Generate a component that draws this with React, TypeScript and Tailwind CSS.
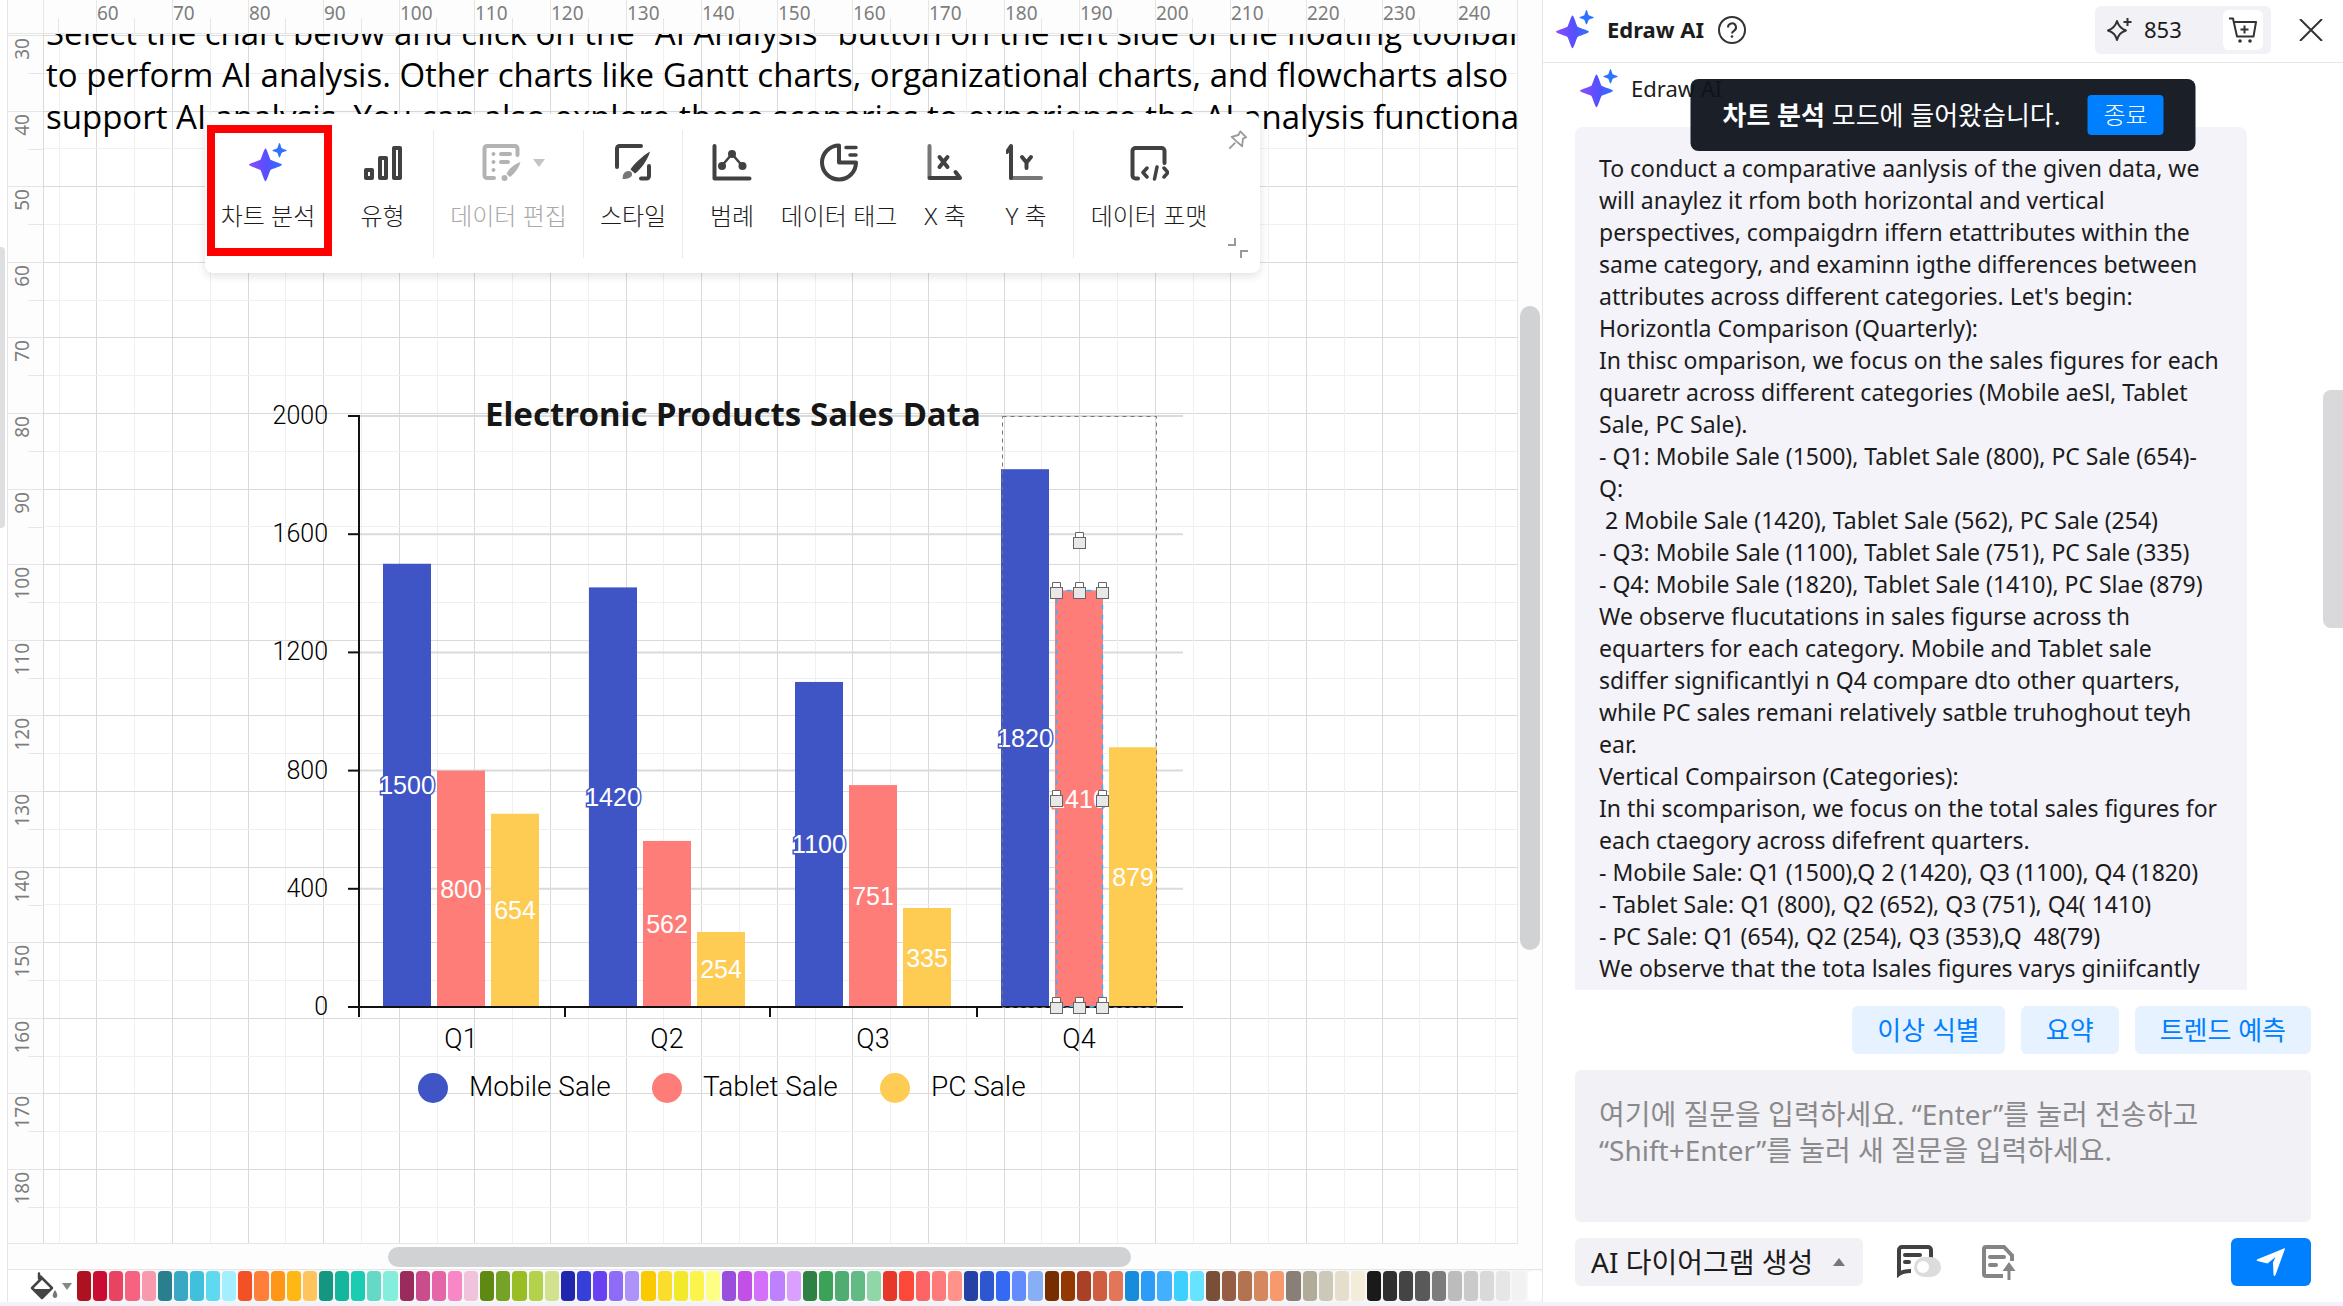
import React from "react";

const SERIES = [
  { name: "Mobile Sale", color: "#4055c5", dot: 433, text: 469 },
  { name: "Tablet Sale", color: "#ff7d78", dot: 667, text: 703 },
  { name: "PC Sale", color: "#fecc53", dot: 895, text: 931 },
];

const QUARTERS = [
  { name: "Q1", values: [1500, 800, 654] },
  { name: "Q2", values: [1420, 562, 254] },
  { name: "Q3", values: [1100, 751, 335] },
  { name: "Q4", values: [1820, 1410, 879] },
];

const SWATCHES = [
  "#ae1120", "#cb0c32", "#e84361", "#f56380", "#f79aae",
  "#2a7f8f", "#38a8c4", "#3fc1de", "#5fd9ef", "#a4efff",
  "#f25125", "#ff7e39", "#ff9618", "#ffb714", "#ffc45e",
  "#149680", "#16b69d", "#1accb2", "#65d9c6", "#84eddb",
  "#9a2b5d", "#c94c8b", "#e566a6", "#f787c6", "#f0c2dc",
  "#608912", "#76a228", "#99be25", "#b3d14a", "#d1e18e",
  "#2026ad", "#3640d9", "#6a41f0", "#8e6cf8", "#ad92fa",
  "#fac900", "#fbdd2c", "#f0ea2a", "#faf44b", "#fdfe84",
  "#994edc", "#c250e6", "#d36ffa", "#bf80ff", "#dba0ff",
  "#2f8043", "#3ba257", "#50ac73", "#62bb85", "#90d6a9",
  "#e6382a", "#fe493a", "#fc6465", "#ff7a7a", "#ff9289",
  "#2541a5", "#2d57d1", "#3369f3", "#628bfe", "#88aef5",
  "#762e01", "#943802", "#a84126", "#cf5e40", "#e27658",
  "#188cdc", "#2c9cf6", "#43b0ff", "#3cd0ff", "#68e3ff",
  "#7a4f37", "#945d44", "#b37250", "#d5875f", "#f6996c",
  "#897f76", "#b1ab99", "#cdc9b8", "#e6decd", "#f3ecd9",
  "#1a1a1a", "#2f2f2f", "#444444", "#595959", "#7c7c7c",
  "#bcbcbc", "#cacaca", "#d9d9d9", "#e6e6e6", "#f2f2f2", "#ffffff",
];

const MESSAGE = [
  "To conduct a comparative aanlysis of the given data, we",
  "will anaylez it rfom both horizontal and vertical",
  "perspectives, compaigdrn iffern etattributes within the",
  "same category, and examinn igthe differences between",
  "attributes across different categories. Let's begin:",
  "Horizontla Comparison (Quarterly):",
  "In thisc omparison, we focus on the sales figures for each",
  "quaretr across different categories (Mobile aeSl, Tablet",
  "Sale, PC Sale).",
  "- Q1: Mobile Sale (1500), Tablet Sale (800), PC Sale (654)-",
  "Q:",
  " 2 Mobile Sale (1420), Tablet Sale (562), PC Sale (254)",
  "- Q3: Mobile Sale (1100), Tablet Sale (751), PC Sale (335)",
  "- Q4: Mobile Sale (1820), Tablet Sale (1410), PC Slae (879)",
  "We observe flucutations in sales figurse across th",
  "equarters for each category. Mobile and Tablet sale",
  "sdiffer significantlyi n Q4 compare dto other quarters,",
  "while PC sales remani relatively satble truhoghout teyh",
  "ear.",
  "Vertical Compairson (Categories):",
  "In thi scomparison, we focus on the total sales figures for",
  "each ctaegory across difefrent quarters.",
  "- Mobile Sale: Q1 (1500),Q 2 (1420), Q3 (1100), Q4 (1820)",
  "- Tablet Sale: Q1 (800), Q2 (652), Q3 (751), Q4( 1410)",
  "- PC Sale: Q1 (654), Q2 (254), Q3 (353),Q  48(79)",
  "We observe that the tota lsales figures varys giniifcantly",
];

const STEP = 75.6;
const range = (n: number) => Array.from({ length: n }, (_, i) => i);

function Sparkle({ id }: { id: string }) {
  return (
    <svg width="38" height="39" viewBox="0 0 38 39" aria-hidden="true">
      <defs>
        <linearGradient id={id} x1="0" y1="0" x2="1" y2="0">
          <stop offset="0" stopColor="#8f4bff" />
          <stop offset="0.55" stopColor="#5450ff" />
          <stop offset="1" stopColor="#2f72ff" />
        </linearGradient>
      </defs>
      <path
        fill={`url(#${id})`}
        d="M16.500 5.500C17.800 5.500 19.500 12.500 21.500 16.700C25.700 18.700 33 20.500 33 21.800C33 23.100 25.700 24.900 21.500 26.900C19.500 31 17.800 38.200 16.500 38.200C15.200 38.200 13.500 31 11.500 26.900C7.300 24.900 0 23.100 0 21.800C0 20.500 7.300 18.700 11.500 16.700C13.500 12.500 15.200 5.500 16.500 5.500Z"
      />
      <path
        fill="#2f72ff"
        d="M30.500 0C31.200 0 31.700 3.200 32.700 5.200C34.700 6.200 37.800 6.800 37.800 7.500C37.800 8.200 34.700 8.800 32.700 9.800C31.700 11.800 31.200 14.600 30.500 14.600C29.800 14.600 29.300 11.800 28.300 9.800C26.300 8.800 23.400 8.200 23.400 7.500C23.400 6.800 26.300 6.200 28.300 5.200C29.300 3.200 29.800 0 30.500 0Z"
      />
    </svg>
  );
}

function Glyph({ children, color = "#414141" }: { children: React.ReactNode; color?: string }) {
  return (
    <svg
      width="40"
      height="40"
      viewBox="0 0 40 40"
      fill="none"
      stroke={color}
      strokeWidth="4"
      strokeLinecap="round"
      strokeLinejoin="round"
      aria-hidden="true"
      className="shrink-0"
    >
      {children}
    </svg>
  );
}

const TypeIcon = () => (
  <Glyph>
    <rect x="3" y="28" width="6" height="8" />
    <rect x="17" y="16" width="6" height="20" />
    <rect x="31" y="6" width="6" height="30" />
  </Glyph>
);

const EditIcon = () => (
  <Glyph color="#b3b3b3">
    <path d="M13 36H6a2.500 2.500 0 0 1-2.500-2.500V6.500A2.500 2.500 0 0 1 6 4h28a2.500 2.500 0 0 1 2.500 2.500V13" />
    <path d="M12.500 12v.1M12.500 20v.1M12.500 28v.1M20 12h9M20 20h7" />
    <path fill="#b3b3b3" stroke="none" d="M39.500 20c-6 2-12.500 7.500-14 12l3.500 3c4-3 9-9 10.500-15z" />
    <circle cx="23.500" cy="36" r="3" fill="#b3b3b3" stroke="none" />
  </Glyph>
);

const StyleIcon = () => (
  <Glyph>
    <path d="M4 25V6.500A2.500 2.500 0 0 1 6.500 4H28" />
    <path d="M36 24v10a2.500 2.500 0 0 1-2.500 2.500H28" />
    <path fill="#414141" stroke="none" d="M37 9.500c-7 4-17 13-19.500 18l4.500 4C27 28 35 18 37 9.500z" />
    <path fill="#777" stroke="none" d="M15.500 29c2.500 0 4 2 3.500 4-.6 2.500-4 4-9.500 4 .6-2 0-3 1-5 1-2 3-3 5-3z" />
  </Glyph>
);

const LegendIcon = () => (
  <Glyph>
    <path d="M2.500 4v32.500h35" />
    <path strokeWidth="2.500" d="M10 23.500 20 12l10 11.500" />
    <circle cx="20" cy="12" r="4" fill="#414141" stroke="none" />
    <circle cx="10" cy="24" r="4" fill="#414141" stroke="none" />
    <circle cx="30.500" cy="24" r="4" fill="#414141" stroke="none" />
  </Glyph>
);

const TagIcon = () => (
  <Glyph>
    <path d="M20 3.500a17 17 0 1 0 17 17H20z" />
    <path d="M27 5.500h10M31 13h6" strokeWidth="3.500" />
  </Glyph>
);

const XAxisIcon = () => (
  <Glyph>
    <path stroke="#777" d="M4.500 4v31" />
    <path d="M4.500 36H35l-4.500-6" />
    <path d="M14.500 15 22.500 25M22.500 15l-8 10" />
  </Glyph>
);

const YAxisIcon = () => (
  <Glyph>
    <path stroke="#777" d="M5 36h30" />
    <path d="M5 36V4l-4 6" />
    <path d="M16 15l4.500 5.500L25 15M20.500 20.500V26" />
  </Glyph>
);

const FormatIcon = () => (
  <Glyph>
    <path d="M9 36.500H6.500A3 3 0 0 1 3.500 33.500V9A3 3 0 0 1 6.500 6h26A3 3 0 0 1 35.500 9v12" />
    <path strokeWidth="3.500" d="M18 26l-4 4.500 4 4.500M35 26l4 4.500-4 4.500M28 25l-2.500 12" />
  </Glyph>
);

function Tool({ label, icon, disabled }: { label: string; icon: React.ReactNode; disabled?: boolean }) {
  return (
    <button
      type="button"
      disabled={disabled}
      className="flex flex-col items-center gap-[18px] pt-3 text-[24px] leading-8 font-light whitespace-nowrap text-[#1c1c1c] disabled:text-[#a9a9a9]"
    >
      <span className="flex h-10 items-center">{icon}</span>
      <span>{label}</span>
    </button>
  );
}

function FloatingToolbar() {
  return (
    <div className="absolute top-20 left-[161px] flex h-[159px] w-[1055px] rounded-lg bg-white pt-4 pb-[15px] shadow-[0_3px_10px_rgba(0,0,0,0.12)]">
      <div className="flex">
        <div className="grid w-[127px] border-r border-[#ebebeb]">
          <Tool label="차트 분석" icon={<Sparkle id="spark-tool" />} />
        </div>
        <div className="grid w-[102px] border-r border-[#ebebeb]">
          <Tool label="유형" icon={<TypeIcon />} />
        </div>
        <div className="grid w-[150px] border-r border-[#ebebeb]">
          <Tool
            label="데이터 편집"
            disabled
            icon={
              <span className="flex items-center gap-3 pl-2">
                <EditIcon />
                <svg width="12" height="9" viewBox="0 0 12 9" fill="#c4c4c4" aria-hidden="true">
                  <path d="M0 1h12L6 9z" />
                </svg>
              </span>
            }
          />
        </div>
        <div className="grid w-[99px] border-r border-[#ebebeb]">
          <Tool label="스타일" icon={<StyleIcon />} />
        </div>
        <div className="grid w-[391px] grid-cols-[98px_116px_96px_66px] border-r border-[#ebebeb]">
          <Tool label="범례" icon={<LegendIcon />} />
          <Tool label="데이터 태그" icon={<TagIcon />} />
          <Tool label="X 축" icon={<XAxisIcon />} />
          <Tool label="Y 축" icon={<YAxisIcon />} />
        </div>
        <div className="grid w-[150px]">
          <Tool label="데이터 포맷" icon={<FormatIcon />} />
        </div>
      </div>
      <div className="flex flex-1 flex-col items-center justify-between pr-2">
        <button type="button" aria-label="고정">
          <svg width="20" height="20" viewBox="0 0 22 22" fill="none" stroke="#999" strokeWidth="2" strokeLinejoin="round" aria-hidden="true">
            <path d="M13.500 1.500l6.500 6.500-3.500 1.500-1 8.500L4 7.500l7.500-2zM8 14l-6.500 6.500" />
          </svg>
        </button>
        <button type="button" aria-label="축소">
          <svg width="20" height="20" viewBox="0 0 20 20" fill="none" stroke="#999" strokeWidth="2" aria-hidden="true">
            <path d="M7 0v7H0M13 20v-7h7" />
          </svg>
        </button>
      </div>
      <div className="pointer-events-none absolute top-[11px] left-[2px] h-[131px] w-[125px] border-8 border-[#ff0000]" />
    </div>
  );
}

function LockHandle({ x, y }: { x: number; y: number }) {
  return (
    <g stroke="#666" fill="#e8e8e8">
      <path d={`M${x - 4} ${y - 6}v-5h8v5`} fill="#fff" />
      <rect x={x - 6} y={y - 6} width="12" height="11" />
    </g>
  );
}

function Chart() {
  const base = 1007;
  const yOf = (v: number) => base - (v * 591) / 2000;
  return (
    <svg
      className="absolute top-[356px] left-[216px]"
      width="940"
      height="730"
      viewBox="260 390 940 730"
      role="img"
      aria-label="Electronic Products Sales Data"
    >
      {[2000, 1600, 1200, 800, 400, 0].map((v) => (
        <g key={v}>
          {v > 0 && <line x1="359" x2="1183" y1={yOf(v)} y2={yOf(v)} stroke="#dadada" strokeWidth="2" />}
          <line x1="348" x2="359" y1={yOf(v)} y2={yOf(v)} stroke="#111" strokeWidth="2" />
          <text x="328" y={yOf(v) + 8} textAnchor="end" className="fill-black font-['Roboto'] text-[25px] font-light">
            {v}
          </text>
        </g>
      ))}
      <path d="M359 415V1017M565 1007v10M770 1007v10M977 1007v10M359 1007H1183" stroke="#111" strokeWidth="2" fill="none" />
      {QUARTERS.map((q, qi) => (
        <g key={q.name}>
          {q.values.map((v, si) => {
            const x = 383 + qi * 206 + si * 54;
            return <rect key={si} x={x} y={yOf(v)} width="48" height={base - 1 - yOf(v)} fill={SERIES[si].color} />;
          })}
          {q.values.map((v, si) => (
            <text
              key={si}
              x={407 + qi * 206 + si * 54}
              y={(yOf(v) + base) / 2 + 9}
              textAnchor="middle"
              fill="#fff"
              stroke={SERIES[si].color}
              strokeWidth="3"
              paintOrder="stroke"
              className="font-['Liberation_Sans'] text-[25px]"
            >
              {v}
            </text>
          ))}
          <text x={461 + qi * 206} y="1048" textAnchor="middle" className="fill-black font-['Roboto'] text-[27px] font-light">
            {q.name}
          </text>
        </g>
      ))}
      <text x="485" y="426" className="fill-[#161616] font-['Noto_Sans'] text-[33px] font-bold">
        Electronic Products Sales Data
      </text>
      {SERIES.map((s) => (
        <g key={s.name}>
          <circle cx={s.dot} cy="1088" r="15" fill={s.color} />
          <text x={s.text} y="1096" className="fill-black font-['Roboto'] text-[28px] font-light">
            {s.name}
          </text>
        </g>
      ))}
      <rect x="1002.500" y="416.500" width="154" height="591" fill="none" stroke="#777" strokeDasharray="4 4" />
      <rect x="1056.500" y="590.500" width="46" height="416" fill="none" stroke="#33b5ff" strokeWidth="1.500" strokeDasharray="5 5" />
      {[
        [1079, 543],
        [1056, 593], [1079, 593], [1102, 593],
        [1056, 801], [1102, 801],
        [1056, 1008], [1079, 1008], [1102, 1008],
      ].map(([x, y]) => (
        <LockHandle key={`${x}-${y}`} x={x + 0.5} y={y + 0.5} />
      ))}
    </svg>
  );
}

function Grid() {
  return (
    <svg className="absolute inset-0 h-full w-full" shapeRendering="crispEdges" aria-hidden="true">
      {range(44).map((i) => {
        const x = Math.round(14.6 + i * (STEP / 2));
        const y = Math.round(1 + i * (STEP / 2));
        const c = (major: boolean) => (major ? "#dadada" : "#f0f0f0");
        return (
          <g key={i}>
            <rect x={x} y="0" width="1" height="100%" fill={c(i % 2 === 1)} />
            <rect x="0" y={y} width="100%" height="1" fill={c(i % 2 === 0)} />
          </g>
        );
      })}
    </svg>
  );
}

function TopRuler() {
  return (
    <svg className="h-[34px] w-full shrink-0 border-b border-[#e6e6e6] bg-[#fdfdfd]" aria-hidden="true">
      {range(19).map((i) => {
        const x = Math.round(88.400 + i * STEP);
        return (
          <g key={i}>
            <rect x={x} y="0" width="1" height="34" fill="#e6e6e6" />
            <rect x={x - 38} y="18" width="1" height="16" fill="#e6e6e6" />
            <text x={x + 1} y="20" className="fill-[#7d7d7d] text-[19px]">
              {60 + i * 10}
            </text>
          </g>
        );
      })}
      <rect x="35" y="0" width="1" height="34" fill="#e6e6e6" />
    </svg>
  );
}

function SideRuler() {
  return (
    <svg className="h-full w-[35px] shrink-0 bg-[#fdfdfd]" aria-hidden="true">
      {range(16).map((i) => {
        const y = Math.round(1 + i * STEP);
        const label = String(30 + i * 10);
        return (
          <g key={i}>
            <rect x="0" y={y} width="35" height="1" fill="#e6e6e6" />
            <rect x="20" y={y + 38} width="15" height="1" fill="#e6e6e6" />
            <text transform={`translate(21 ${y + 3}) rotate(-90)`} textAnchor="end" className="fill-[#7d7d7d] text-[19px]">
              {label}
            </text>
          </g>
        );
      })}
    </svg>
  );
}

function Palette() {
  return (
    <div className="flex h-[33px] border-t border-[#e6e6e6] bg-[#f7f7f8]">
      <button type="button" aria-label="채우기 색" className="flex w-[69px] items-center gap-1 bg-white pl-[22px]">
        <svg width="28" height="28" viewBox="0 0 28 28" fill="none" aria-hidden="true">
          <path d="M9 1.500v5M10.500 4.500 22 16 12 26 2 16 11 7" stroke="#444" strokeWidth="2.500" strokeLinecap="round" strokeLinejoin="round" />
          <path d="M2 17h20L12 27z" fill="#444" />
          <path d="M25 18c3 4 3 8 0 8s-3-4 0-8z" fill="#777" />
        </svg>
        <svg width="10" height="7" viewBox="0 0 10 7" fill="#888" aria-hidden="true">
          <path d="M0 0h10L5 7z" />
        </svg>
      </button>
      <div className="flex flex-1 gap-[2px] py-px">
        {SWATCHES.map((c, i) => (
          <button key={i} type="button" aria-label={c} className="min-w-0 flex-1 rounded-sm" style={{ backgroundColor: c }} />
        ))}
      </div>
    </div>
  );
}

function Editor() {
  return (
    <section className="flex min-w-0 flex-1 flex-col border-l border-[#e6e6e6]">
      <div className="flex min-h-0 flex-1">
        <div className="flex min-w-0 flex-1 flex-col border-r border-b border-[#e6e6e6]">
          <TopRuler />
          <div className="flex min-h-0 flex-1">
            <SideRuler />
            <main className="relative min-w-0 flex-1 overflow-hidden border-l border-[#dcdcdc] bg-white">
              <Grid />
              <p className="absolute -top-[22px] left-[2px] font-['Open_Sans'] text-[33px] leading-[42px] whitespace-pre text-black">
                {"Select the chart below and click on the “AI Analysis” button on the left side of the floating toolbar\nto perform AI analysis. Other charts like Gantt charts, organizational charts, and flowcharts also\nsupport AI analysis. You can also explore these scenarios to experience the AI analysis functional"}
              </p>
              <Chart />
              <FloatingToolbar />
            </main>
          </div>
        </div>
        <div className="flex w-6 flex-col items-center bg-[#fdfdfd] pt-[306px]">
          <div className="h-[644px] w-5 rounded-full bg-[#d1d2d4]" />
        </div>
      </div>
      <div className="flex h-[25px] items-center bg-[#fdfdfd] pl-[380px]">
        <div className="h-5 w-[743px] rounded-full bg-[#d1d2d4]" />
      </div>
      <Palette />
    </section>
  );
}

function PanelHeader() {
  return (
    <header className="flex h-[63px] shrink-0 items-center border-b border-[#e6e6e6] pr-5 pb-[3px] pl-[13px] text-[#1c1c1c]">
      <Sparkle id="spark-head" />
      <h1 className="ml-[13px] text-[22px] font-bold">Edraw AI</h1>
      <button type="button" aria-label="도움말" className="ml-[14px]">
        <svg width="28" height="28" viewBox="0 0 28 28" fill="none" stroke="#333" strokeWidth="2" aria-hidden="true">
          <circle cx="14" cy="14" r="13" />
          <path d="M10 11.500a4 4 0 1 1 6 3.300c-1.400.8-2 1.400-2 2.700" />
          <circle cx="14" cy="20.500" r="1.300" fill="#333" stroke="none" />
        </svg>
      </button>
      <div className="ml-auto flex h-12 w-44 items-center rounded-md bg-[#f2f1f6] pr-2 pl-[11px]">
        <svg width="26" height="25" viewBox="0 0 26 25" fill="none" stroke="#333" strokeWidth="2" strokeLinejoin="round" aria-hidden="true">
          <path d="M11 4c1.500 5 3.500 7.500 9 9.500-5.500 2-7.500 4-9 9.500-1.500-5.500-3.500-7.500-9-9.500 5.500-2 7.500-4.500 9-9.500z" />
          <path d="M21.500 1v8M17.500 5h8" />
        </svg>
        <span className="ml-3 text-[22px]">853</span>
        <button type="button" aria-label="구매" className="ml-auto grid h-10 w-10 place-items-center rounded-md bg-white">
          <svg width="28" height="26" viewBox="0 0 28 26" fill="none" stroke="#333" strokeWidth="2" strokeLinejoin="round" aria-hidden="true">
            <path d="M0 1.500h4l4 18h16.500L27 5H5M15.500 8.500v8M11.500 12.500h8" />
            <circle cx="11" cy="24" r="1.800" fill="#333" stroke="none" />
            <circle cx="21" cy="24" r="1.800" fill="#333" stroke="none" />
          </svg>
        </button>
      </div>
      <button type="button" aria-label="닫기" className="ml-7">
        <svg width="24" height="22" viewBox="0 0 24 22" fill="none" stroke="#333" strokeWidth="2" aria-hidden="true">
          <path d="M1 0l22 22M23 0L1 22" />
        </svg>
      </button>
    </header>
  );
}

function Composer() {
  return (
    <form className="shrink-0 px-8 pb-4" onSubmit={(e) => e.preventDefault()}>
      <div className="flex justify-end gap-4 py-4">
        {["이상 식별", "요약", "트렌드 예측"].map((t) => (
          <button key={t} type="button" className="h-12 rounded-md bg-[#e6f2ff] px-[25px] text-[26px] leading-none text-[#0080ff]">
            {t}
          </button>
        ))}
      </div>
      <textarea
        aria-label="질문"
        placeholder={"여기에 질문을 입력하세요. “Enter”를 눌러 전송하고 “Shift+Enter”를 눌러 새 질문을 입력하세요."}
        className="block h-[152px] w-full resize-none rounded-md bg-[#f2f1f6] py-[26px] pr-24 pl-6 text-[28px] leading-9 placeholder:text-[#8a8a8c]"
      />
      <div className="mt-4 flex items-center">
        <div className="relative">
          <select aria-label="모드" className="h-12 w-72 appearance-none rounded-md bg-[#f2f1f6] pl-4 text-[28px] text-[#1c1c1c]">
            <option>AI 다이어그램 생성</option>
          </select>
          <svg className="pointer-events-none absolute top-5 right-[18px]" width="12" height="8" viewBox="0 0 12 8" fill="#777" aria-hidden="true">
            <path d="M6 0l6 8H0z" />
          </svg>
        </div>
        <button type="button" aria-label="대화 모드" className="ml-[34px]">
          <svg width="46" height="36" viewBox="0 0 46 36" fill="none" stroke="#414141" strokeWidth="4" aria-hidden="true">
            <path d="M34 14V6a3 3 0 0 0-3-3H5a3 3 0 0 0-3 3v24c3-2.500 6-3 12-3" />
            <path strokeLinecap="round" d="M8 11h15M8 18h4" />
            <rect x="17" y="13" width="27" height="20" rx="10" fill="#dcdcdc" stroke="none" />
            <circle cx="26" cy="23" r="6" fill="#fff" stroke="none" />
          </svg>
        </button>
        <button type="button" aria-label="파일 업로드" className="ml-[39px]">
          <svg width="34" height="36" viewBox="0 0 34 36" fill="none" stroke="#858585" strokeWidth="4" aria-hidden="true">
            <path d="M21 32H4a2 2 0 0 1-2-2V5a2 2 0 0 1 2-2h18l8 8.500V17" />
            <path strokeLinecap="round" d="M8 13h14M8 21h6" />
            <path strokeWidth="3" d="M27 36V22" />
            <path d="M27 18l6.500 9h-13z" fill="#858585" stroke="none" />
          </svg>
        </button>
        <button type="submit" aria-label="보내기" className="ml-auto grid h-12 w-20 place-items-center rounded-md bg-[#0080ff]">
          <svg width="30" height="30" viewBox="0 0 30 30" fill="#fff" aria-hidden="true">
            <path d="M28.500 1.300Q29.200 1 29 1.800L19.500 28q-.9 2-2 0L17 15.500 19.500 10 11.500 16.500 1.500 14q-1.700-.8 0-1.800z" />
          </svg>
        </button>
      </div>
    </form>
  );
}

function AiPanel() {
  return (
    <aside className="relative flex w-[801px] shrink-0 flex-col border-l border-[#e6e6e6] bg-white">
      <PanelHeader />
      <div className="relative min-h-0 flex-1 overflow-hidden pr-24 pl-8 text-[#1c1c1c]">
        <div className="flex h-16 items-center gap-[13px] pb-[14px] pl-[5px]">
          <Sparkle id="spark-msg" />
          <span className="text-[22px]">Edraw AI</span>
        </div>
        <div className="rounded-t-lg bg-[#f4f3f9] px-6 pt-[25px] pb-8 text-[23px] leading-8 whitespace-pre">
          {MESSAGE.map((line, i) => (
            <div key={i}>{line}</div>
          ))}
        </div>
        <div className="absolute top-[327px] right-0 h-[238px] w-5 rounded-l-lg bg-[#d9d9dc]" />
      </div>
      <Composer />
      <div
        role="status"
        className="absolute top-[79px] left-1/2 flex h-18 w-[505px] -translate-x-1/2 items-center justify-between rounded-lg bg-[#0f131c]/95 pr-8 pl-8 text-[26px] whitespace-nowrap text-white"
      >
        <p>
          <strong className="font-bold">차트 분석</strong> 모드에 들어왔습니다.
        </p>
        <button type="button" className="h-10 w-[76px] rounded-sm bg-[#0080ff] text-[24px] leading-none font-light">
          종료
        </button>
      </div>
    </aside>
  );
}

export default function App() {
  return (
    <div className="flex h-screen flex-col bg-white font-['Noto_Sans','Noto_Sans_CJK_KR',sans-serif]">
      <div className="flex min-h-0 flex-1">
        <div className="w-[7px] shrink-0 pt-[247px]">
          <div className="h-[281px] w-[5px] rounded-r-sm bg-[#dfdfe2]" />
        </div>
        <Editor />
        <AiPanel />
      </div>
      <footer className="h-1 shrink-0 bg-[#f2f2f8]" />
    </div>
  );
}
